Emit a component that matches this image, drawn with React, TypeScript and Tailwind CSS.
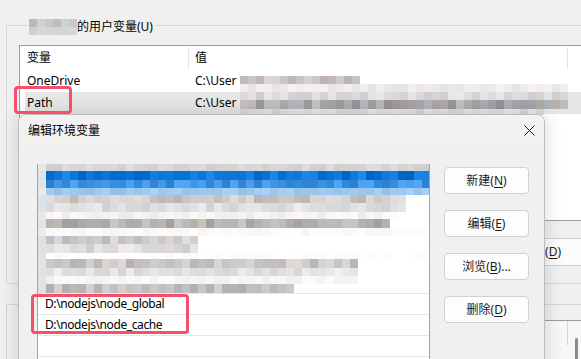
import React from 'react';

type RGB = [number, number, number];
type MRow = { h: number; c: RGB; end: number; v: number };

const rnd = (a: number, b: number, s: number) => {
  const x = Math.sin(a * 12.9898 + b * 78.233 + s * 37.719) * 43758.5453;
  return x - Math.floor(x);
};

const cl = (n: number) => Math.max(0, Math.min(255, Math.round(n)));

const shade = (c: RGB, v: number, a: number, b: number, seed: number) => {
  const d = (rnd(a, b, seed) - 0.5) * 2 * v;
  const t = (rnd(b, a, seed + 3) - 0.5) * v * 0.4;
  return `rgb(${cl(c[0] + d + t)}, ${cl(c[1] + d)}, ${cl(c[2] + d - t)})`;
};

// blurred-out rows of the screenshot, one block = 8px wide
const USER_ROWS: MRow[] = [
  { h: 8, c: [198, 197, 199], end: 6, v: 14 },
  { h: 8, c: [216, 216, 216], end: 6, v: 10 },
];

const VALUE_ROWS: MRow[] = [
  { h: 8, c: [202, 195, 198], end: 15, v: 18 },
  { h: 8, c: [237, 234, 235], end: 41, v: 8 },
  { h: 8, c: [221, 219, 220], end: 41, v: 14 },
  { h: 9, c: [172, 170, 173], end: 41, v: 24 },
  { h: 6, c: [225, 224, 225], end: 38, v: 10 },
];

const PATH_ROWS: MRow[] = [
  { h: 7, c: [214, 214, 214], end: 49, v: 8 },
  { h: 9, c: [10, 118, 214], end: 49, v: 20 },
  { h: 8, c: [62, 146, 228], end: 49, v: 20 },
  { h: 7, c: [156, 201, 240], end: 49, v: 10 },
  { h: 8, c: [204, 201, 201], end: 46, v: 22 },
  { h: 9, c: [224, 222, 222], end: 46, v: 14 },
  { h: 7, c: [244, 243, 243], end: 45, v: 8 },
  { h: 9, c: [182, 179, 176], end: 44, v: 20 },
  { h: 8, c: [250, 249, 249], end: 49, v: 5 },
  { h: 8, c: [206, 204, 204], end: 20, v: 20 },
  { h: 9, c: [220, 218, 218], end: 20, v: 16 },
  { h: 6, c: [253, 253, 253], end: 49, v: 3 },
  { h: 9, c: [202, 199, 199], end: 40, v: 20 },
  { h: 8, c: [228, 226, 226], end: 40, v: 14 },
  { h: 8, c: [246, 246, 246], end: 40, v: 6 },
  { h: 9, c: [196, 194, 194], end: 32, v: 20 },
];

const Mosaic: React.FC<{ rows: MRow[]; cols: number; seed: number; lead?: RGB; rest?: string }> = ({
  rows,
  cols,
  seed,
  lead,
  rest,
}) => (
  <div className="flex flex-col overflow-hidden">
    {rows.map((row, i) => (
      <div key={i} className="flex" style={{ height: row.h }}>
        {Array.from({ length: cols }, (_, j) => {
          let bg = rest ?? 'transparent';
          if (lead && j === 0) bg = shade(lead, 6, i, j, seed);
          else if (j < row.end) bg = shade(row.c, row.v, i, j, seed);
          return <span key={j} className="block h-full w-[8px] shrink-0" style={{ backgroundColor: bg }} />;
        })}
      </div>
    ))}
  </div>
);

const Key: React.FC<{ label: string; hot: string; tail?: string }> = ({ label, hot, tail = '' }) => (
  <>
    {label}(<span className="underline underline-offset-2">{hot}</span>){tail}
  </>
);

const DialogButton: React.FC<{ children: React.ReactNode }> = ({ children }) => (
  <button
    type="button"
    className="flex h-[27px] w-[85px] items-center justify-center rounded-[4px] border border-[#d1d1d1] bg-[#fdfdfd] text-[12px] text-[#1b1b1b]"
  >
    {children}
  </button>
);

const OuterButton: React.FC<{ children: React.ReactNode }> = ({ children }) => (
  <button
    type="button"
    className="flex h-[28px] w-[90px] items-center justify-center rounded-[4px] border border-[#cfcfcf] bg-[#fbfbfb] text-[12px] text-[#1b1b1b]"
  >
    {children}
  </button>
);

export default function App() {
  return (
    <div className="relative h-[359px] w-[581px] overflow-hidden bg-[#f0f0f0] pl-[6px] pt-[15px] font-['Noto_Sans','Noto_Sans_CJK_SC',sans-serif] text-[12px] leading-[16px] text-black">
      {/* 用户变量 */}
      <fieldset className="w-[640px] border border-[#d6d6d6] pb-[17px] pl-[12px] pt-[10px]">
        <legend className="ml-[8px] px-[2px]">
          <span className="inline-flex items-center">
            <Mosaic rows={USER_ROWS} cols={6} seed={2} />
            <span>的用户变量(U)</span>
          </span>
        </legend>

        <div className="relative h-[176px] border border-[#9c9c9f] bg-white">
          <div className="flex h-[24px] items-center">
            <div className="flex h-[22px] w-[169px] items-center border-r border-[#e5e5e5] pl-[7px]">变量</div>
            <div className="flex h-[22px] w-[379px] items-center border-r border-[#e5e5e5] pl-[6px]">值</div>
          </div>
          <div className="flex h-[22px] items-center">
            <div className="w-[168px] pl-[7px]">OneDrive</div>
            <div className="pl-[7px]">{'C:\\User'}</div>
          </div>
          <div className="ml-[5px] flex h-[22px] items-center bg-[#e6e6e6]">
            <div className="w-[163px] pl-[2px]">Path</div>
            <div className="pl-[7px]">{'C:\\User'}</div>
          </div>
          <div className="absolute left-[220px] top-[30px]">
            <Mosaic rows={VALUE_ROWS} cols={41} seed={5} />
          </div>
        </div>

        <div className="mt-[17px] flex gap-[8px] pl-[281px]">
          <OuterButton>
            <Key label="新建" hot="W" tail="..." />
          </OuterButton>
          <OuterButton>
            <Key label="编辑" hot="I" tail="..." />
          </OuterButton>
          <OuterButton>
            <Key label="删除" hot="D" />
          </OuterButton>
        </div>
      </fieldset>

      {/* 系统变量 */}
      <fieldset className="mt-[12px] w-[640px] border border-[#d6d6d6] pl-[12px] pt-[8px]">
        <legend className="ml-[7px] px-[1px]">系统变量(S)</legend>
        <div className="relative h-[60px] border border-[#9c9c9f] bg-[#f7f7f7]">
          <div className="flex h-[24px]">
            <div className="w-[169px] border-r border-[#e0e0e0]" />
            <div className="w-[379px] border-r border-[#d6d6d6]" />
          </div>
          <div className="absolute left-[555px] top-[17px] h-[50px] w-[3px] rounded-full bg-[#8a8a8a]" />
        </div>
      </fieldset>

      {/* 编辑环境变量 dialog */}
      <div className="absolute left-[18px] top-[114px] h-[260px] w-[527px] overflow-hidden rounded-t-[8px] border border-[#bcbcbc] bg-[#f0f0f0] shadow-[0_0_18px_rgba(0,0,0,0.16)]">
        <div className="flex h-[31px] items-center justify-between bg-[#f4f1f1] pl-[9px] pr-[9px]">
          <span>编辑环境变量</span>
          <svg width="11" height="11" viewBox="0 0 11 11" fill="none">
            <path d="M0.5 0.5L10.5 10.5M10.5 0.5L0.5 10.5" stroke="#1b1b1b" strokeWidth="1" />
          </svg>
        </div>

        <div className="flex pl-[18px] pt-[18px]">
          <div className="h-[240px] w-[393px] border-x border-[#a3a3a3] bg-white">
            <Mosaic rows={PATH_ROWS} cols={49} seed={9} lead={[226, 228, 230]} rest="#ffffff" />
            {['D:\\nodejs\\node_global', 'D:\\nodejs\\node_cache', '', ''].map((p, i) => (
              <div
                key={i}
                className="flex h-[21px] items-center border-t border-[#e6e6e6] pl-[7px] tracking-[-0.4px]"
              >
                {p}
              </div>
            ))}
          </div>

          <div className="ml-[14px] mt-[3px] flex flex-col gap-[16px]">
            <DialogButton>
              <Key label="新建" hot="N" />
            </DialogButton>
            <DialogButton>
              <Key label="编辑" hot="E" />
            </DialogButton>
            <DialogButton>
              <Key label="浏览" hot="B" tail="..." />
            </DialogButton>
            <DialogButton>
              <Key label="删除" hot="D" />
            </DialogButton>
          </div>
        </div>
      </div>

      {/* highlight boxes */}
      <div className="absolute left-[14px] top-[86px] h-[28px] w-[58px] rounded-[4px] border-[3px] border-[#f2506b]" />
      <div className="absolute left-[31px] top-[294px] h-[40px] w-[158px] rounded-[4px] border-[3px] border-[#f2506b]" />
    </div>
  );
}
